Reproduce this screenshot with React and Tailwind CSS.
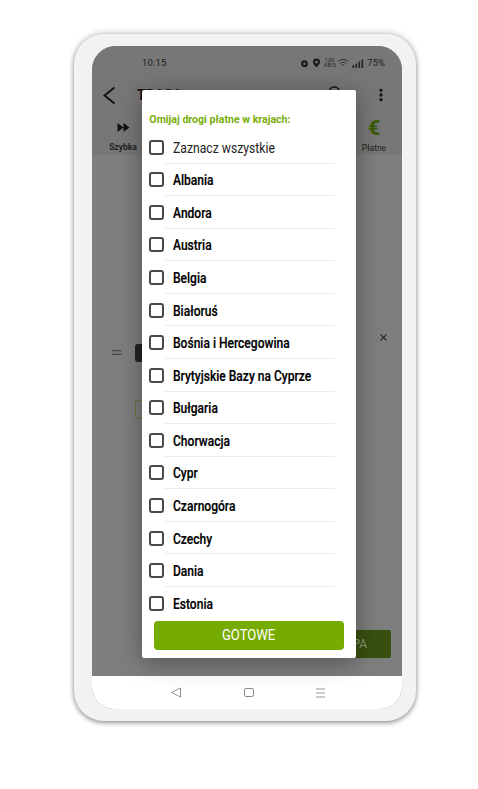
import { Search, EllipsisVertical, X, Equal } from "lucide-react";

const COUNTRIES = [
  "Albania",
  "Andora",
  "Austria",
  "Belgia",
  "Białoruś",
  "Bośnia i Hercegowina",
  "Brytyjskie Bazy na Cyprze",
  "Bułgaria",
  "Chorwacja",
  "Cypr",
  "Czarnogóra",
  "Czechy",
  "Dania",
  "Estonia",
];

const Row = ({ label, bold, last }) => (
  <div className="h-[32.57px] flex items-center relative shrink-0">
    <div className="w-[15px] h-[15px] ml-[7px] rounded-[3px] border-2 border-[#4a4a4a] bg-white shrink-0" />
    <span
      className={
        "ml-[8.5px] pt-px text-[14px] leading-none whitespace-nowrap origin-left " +
        (bold ? "font-medium text-black scale-x-[0.86] [-webkit-text-stroke:0.2px_#000]" : "font-normal scale-x-[0.87] text-[#222]")
      }
    >
      {label}
    </span>
    {!last && <div className="absolute left-[23px] right-[21px] bottom-0 h-px bg-[#ececec]" />}
  </div>
);

const App = () => {
  return (
    <div className="w-[478px] h-[789px] bg-white overflow-hidden pt-[34px] pl-[74px] font-['Roboto',sans-serif]">
      {/* phone frame */}
      <div className="w-[342px] h-[687px] rounded-[30px] bg-[#f4f2f0] pt-[12px] pl-[18px] pr-[14px] shadow-[0_2px_5px_rgba(0,0,0,0.4),0_-2px_6px_rgba(0,0,0,0.14)]">
        <div className="relative w-[310px] h-[663px] rounded-t-[24px] rounded-b-[22px] overflow-hidden bg-[#7c7c7c] flex flex-col">
          {/* status bar */}
          <div className="h-[33px] shrink-0 flex items-center pl-[50px] pr-[17px] pt-[1px] text-[#1c1c1c] bg-[#777]">
            <span className="text-[9.5px] tracking-[0.2px]">10:15</span>
            <div className="ml-auto flex items-center gap-[3px] text-[9.5px]">
              <svg width="9" height="9" viewBox="0 0 10 10">
                <circle cx="5" cy="5.3" r="3.8" fill="#1c1c1c" />
                <circle cx="5" cy="5.3" r="1.5" fill="#666" />
              </svg>
              <svg width="9" height="10" viewBox="0 0 10 11">
                <path d="M5 0.5a4 4 0 0 1 4 4c0 2.5-4 6-4 6s-4-3.500-4-6a4 4 0 0 1 4-4z" fill="#1c1c1c" />
                <circle cx="5" cy="4.5" r="1.500" fill="#777" />
              </svg>
              <span className="text-[5px] leading-[5px] text-center w-[10px]">1,00<br />KB/S</span>
              <svg width="12" height="10" viewBox="0 0 12 10" fill="none" stroke="#333" strokeWidth="1">
                <path d="M1 3.500a7 7 0 0 1 10 0M2.800 5.500a4.500 4.500 0 0 1 6.400 0M4.500 7.300a2 2 0 0 1 3 0" />
              </svg>
              <svg width="12" height="9" viewBox="0 0 12 9" fill="#222">
                <rect x="0.500" y="6" width="1.600" height="3" />
                <rect x="3.500" y="4.500" width="1.600" height="4.500" />
                <rect x="6.500" y="2.500" width="1.600" height="6.500" />
                <rect x="9.500" y="0.500" width="1.600" height="8.500" />
              </svg>
              <span>75%</span>
            </div>
          </div>

          {/* header */}
          <div className="h-[32px] shrink-0 flex items-center pl-[11px] pr-[13px] bg-[#777] text-[#111]">
            <svg width="13" height="19" viewBox="0 0 13 19" fill="none" stroke="currentColor" strokeWidth="2">
              <path d="M11.500 1.500 1.500 9.500l10 8" />
            </svg>
            <span className="ml-[21px] text-[14px] font-bold">TRASA</span>
            <Search size={16} strokeWidth={2} className="ml-auto mr-[30px] -mt-[4px]" />
            <EllipsisVertical size={16} strokeWidth={3} />
          </div>

          {/* route options */}
          <div className="h-[44px] shrink-0 flex justify-between pl-[18px] pr-[15px] pt-[3px] bg-[#777]">
            <div className="flex flex-col items-center w-[26px]">
              <svg className="mt-[9px]" width="13" height="9" viewBox="0 0 13 9" fill="#111">
                <path d="M0.500 0 6.500 4.500 0.500 9zM6.500 0l6 4.500-6 4.500z" />
              </svg>
              <span className="mt-[10px] text-[8.5px] leading-[10px] font-bold text-[#222]">Szybka</span>
            </div>
            <div className="flex flex-col items-center w-[26px]">
              <span className="mt-[3px] text-[21px] leading-[22px] font-black text-[#3c5c08]">€</span>
              <span className="mt-[4px] text-[8.5px] leading-[10px] text-[#222]">Płatne</span>
            </div>
          </div>

          {/* list behind dialog */}
          <div className="flex-1 flex flex-col bg-[#7e7e7e]">
            <div className="mt-[172px] flex items-start pl-[17px] pr-[13px]">
              <Equal size={15} strokeWidth={2} className="text-[#444] mt-[18px]" />
              <div className="w-[14px] h-[18px] ml-[11px] mt-[17px] rounded-[3px] bg-[#222]" />
              <X size={11} strokeWidth={2.2} className="ml-auto mt-[5px] text-[#111]" />
            </div>
            <div className="mt-[38px] ml-[43px] w-[14px] h-[19px] rounded-[3px] border border-[#5f7a3c]" />
            <div className="mt-auto mb-[18px] ml-auto mr-[11px] w-[60px] h-[28px] rounded-[2px] bg-[#38500f] flex items-center justify-end pr-[24px] text-[12px] text-[#8a9a78]">
              PA
            </div>
          </div>

          {/* nav bar */}
          <div className="h-[33px] shrink-0 bg-white flex items-center pl-[78px] text-[#8a8a8a]">
            <svg width="12" height="11" viewBox="0 0 12 11" fill="none" stroke="currentColor" strokeWidth="0.900">
              <path d="M10.500 1 1.500 5.500l9 4.500z" />
            </svg>
            <div className="ml-[62px] w-[10px] h-[9px] rounded-[2px] border border-current" />
            <svg className="ml-[61px]" width="11" height="10" viewBox="0 0 11 10" stroke="currentColor" strokeWidth="0.900">
              <path d="M1 1h9M1 5h9M1 9h9" />
            </svg>
          </div>

          {/* dialog */}
          <div className="absolute left-[50px] top-[44px] w-[214px] h-[568px] bg-white rounded-[2px] shadow-[0_4px_24px_rgba(0,0,0,0.35)] flex flex-col">
            <div className="h-[41px] shrink-0 pl-[8px] pt-[23px] text-[11.5px] leading-[12px] font-bold text-[#79ae0c] whitespace-nowrap origin-left scale-x-[0.92]">
              Omijaj drogi płatne w krajach:
            </div>
            <Row label="Zaznacz wszystkie" />
            {COUNTRIES.map((c, i) => (
              <Row key={c} label={c} bold last={i === COUNTRIES.length - 1} />
            ))}
            <button className="mt-[2px] mx-[12px] h-[29px] rounded-[4px] bg-[#76ab00] text-white text-[14.5px] leading-none flex items-center justify-center">
              <span className="scale-x-[0.9]">GOTOWE</span>
            </button>
          </div>
        </div>
      </div>
    </div>
  );
};

export default App;
